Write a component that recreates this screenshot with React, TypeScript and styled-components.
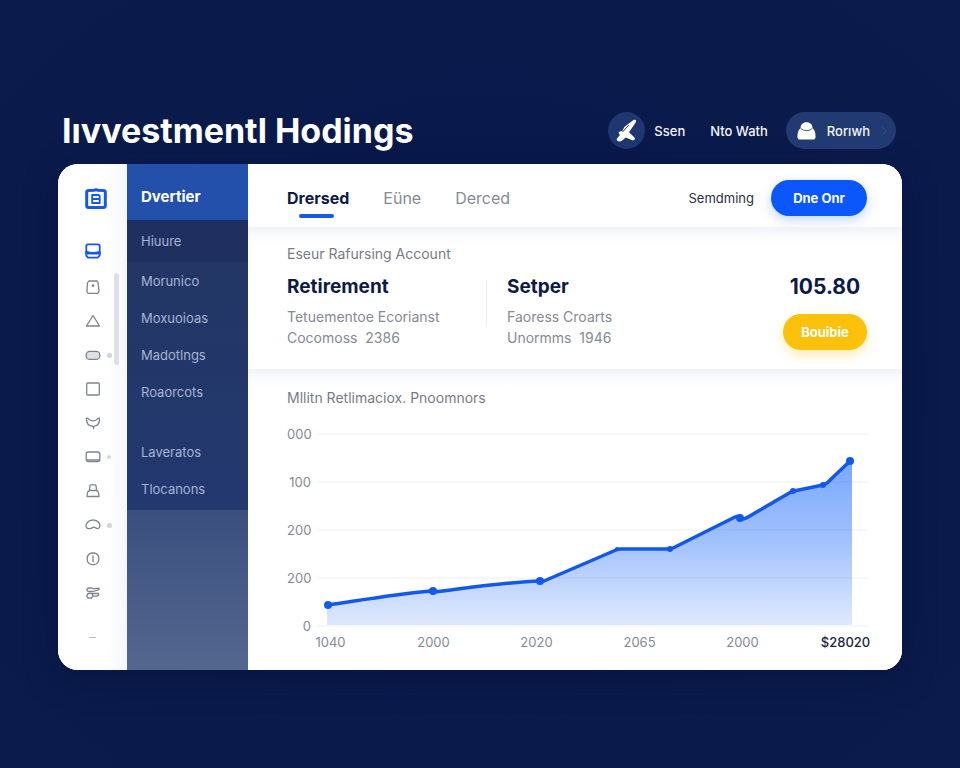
import React from "react";
import styled, { createGlobalStyle, css } from "styled-components";

const Global = createGlobalStyle`
  * { box-sizing: border-box; }
  body {
    margin: 0;
    min-height: 100vh;
    background: radial-gradient(ellipse at center, #07154a 0%, #0a1a4b 60%, #0b1c4c 100%);
    font-family: Inter, "Liberation Sans", sans-serif;
    color: #0d1a45;
  }
  button { font: inherit; border: 0; background: none; padding: 0; cursor: pointer; }
  a { color: inherit; text-decoration: none; }
  h1, h2, p { margin: 0; }
`;

const Page = styled.div`
  padding: 112px 58px 99px;
`;

const TopBar = styled.header`
  display: flex;
  align-items: center;
  justify-content: space-between;
  height: 37px;
  padding: 0 6px 0 4px;
  margin-bottom: 15px;
`;

const Title = styled.h1`
  font-size: 34px;
  line-height: 37px;
  font-weight: 700;
  color: #fff;
`;

const TopActions = styled.div`
  display: flex;
  align-items: center;
  color: #f4f6fc;
  font-size: 13px;
  font-weight: 500;
`;

const UserLink = styled.a`
  display: flex;
  align-items: center;
  gap: 9px;
  margin-right: 25px;
`;

const RoundIcon = styled.span`
  display: grid;
  place-items: center;
  width: 37px;
  height: 37px;
  border-radius: 50%;
  background: #1f3770;
`;

const PillButton = styled.button`
  display: flex;
  align-items: center;
  gap: 11px;
  height: 37px;
  margin-left: 18px;
  padding: 0 9px 0 11px;
  border-radius: 19px;
  background: #213a72;
  color: #f4f6fc;
`;

const Panel = styled.div`
  display: grid;
  grid-template-columns: 69px 121px 1fr;
  border-radius: 20px;
  overflow: hidden;
  background: #fff;
  box-shadow: 0 8px 30px #050f3880;
`;

const Rail = styled.nav`
  position: relative;
  display: flex;
  flex-direction: column;
  padding: 17px 0 15px;
  background: linear-gradient(90deg, #fff 70%, #f4f7fd 100%);
`;

const RailButton = styled.button<{ $tone?: "logo" | "active" }>`
  position: relative;
  display: grid;
  place-items: center;
  width: 69px;
  height: 34px;
  color: #7c8391;
  svg { display: block; }
  ${(p) => p.$tone && css`color: #1459e8;`}
  ${(p) => p.$tone === "logo" && css`height: 36px; margin-bottom: 17px; padding-left: 6px;`}
  ${(p) => p.$tone === "active" && css`margin-bottom: 2px;`}
`;

const RailDot = styled.span<{ $size: number }>`
  position: absolute;
  top: 15px;
  left: 49px;
  width: ${(p) => p.$size}px;
  height: ${(p) => p.$size}px;
  border-radius: 2px;
  background: #d3d6dc;
`;

const ScrollThumb = styled.span`
  position: absolute;
  top: 109px;
  right: 8px;
  width: 5px;
  height: 92px;
  border-radius: 3px;
  background: #dcdfe4;
`;

const RailEnd = styled.span`
  width: 7px;
  height: 1px;
  margin: 27px 0 0 31px;
  background: #b9bdc6;
`;

const Side = styled.nav`
  display: flex;
  flex-direction: column;
  background: linear-gradient(180deg, #3b4f7f 0, #3b4f7f 346px, #54678f 100%);
  font-size: 13px;
  color: #a7b4d4;
`;

const SideHead = styled.a`
  display: flex;
  align-items: center;
  height: 56px;
  padding: 9px 0 0 14px;
  background: #2350aa;
  color: #fff;
  font-size: 15px;
  font-weight: 700;
`;

const SideGroup = styled.div`
  padding-bottom: 3px;
  background: linear-gradient(180deg, #233663, #22386f);
`;

const SideItem = styled.a<{ $current?: boolean; $spaced?: boolean }>`
  display: flex;
  align-items: center;
  height: 37px;
  padding-left: 14px;
  margin-top: ${(p) => (p.$spaced ? 23 : 0)}px;
  ${(p) => p.$current && css`height: 42px; background: #1f3060;`}
`;

const Main = styled.main`
  min-width: 0;
  background: #fff;
`;

const Tabs = styled.div`
  display: flex;
  align-items: center;
  height: 63px;
  padding: 4px 35px 0 39px;
`;

const Tab = styled.button<{ $active?: boolean }>`
  position: relative;
  margin-right: 34px;
  font-size: 16px;
  line-height: 24px;
  color: #868b94;
  ${(p) => p.$active && css`
    color: #0d1a45;
    font-weight: 700;
    &::after {
      content: "";
      position: absolute;
      left: 12px;
      right: 15px;
      bottom: -8px;
      height: 4px;
      border-radius: 2px;
      background: #1459e8;
    }
  `}
`;

const TextLink = styled.a`
  margin-left: auto;
  margin-right: 17px;
  font-size: 13px;
  color: #2a3145;
`;

const Action = styled.button<{ $tone: "blue" | "gold" }>`
  height: 36px;
  border-radius: 18px;
  color: #fff;
  font-size: 13px;
  font-weight: 700;
  ${(p) => p.$tone === "blue"
    ? css`width: 96px; background: #0b57fb; box-shadow: 0 4px 12px #0b57fb40;`
    : css`width: 84px; background: #fcc10b; box-shadow: 0 5px 12px #fcc10b50;`}
`;

const Section = styled.section`
  background: linear-gradient(180deg, #f1f3f8 0, #fafbfd 9px, #fff 18px);
`;

const Caption = styled.p`
  font-size: 14px;
  line-height: 18px;
  color: #777c86;
`;

const Account = styled(Section)`
  padding: 18px 35px 19px 39px;
`;

const AccountRow = styled.div`
  display: grid;
  grid-template-columns: 199px 1px 1fr auto;
  margin-top: 10px;
`;

const Divider = styled.div`
  height: 46px;
  margin-top: 7px;
  background: #eceef2;
`;

const Holding = styled.div<{ $inset?: boolean }>`
  padding-left: ${(p) => (p.$inset ? 20 : 0)}px;
`;

const HoldingName = styled.h2`
  font-size: 19px;
  line-height: 28px;
  font-weight: 700;
  margin-bottom: 5px;
`;

const Detail = styled.p`
  font-size: 14px;
  line-height: 21px;
  color: #858a94;
  white-space: pre;
`;

const Value = styled.div`
  display: flex;
  flex-direction: column;
  align-items: center;
  gap: 13px;
  font-size: 21px;
  line-height: 28px;
  font-weight: 700;
`;

const ChartSection = styled(Section)`
  padding: 20px 0 20px;
`;

const ChartHead = styled.div`
  padding-left: 39px;
`;

const Plot = styled.div`
  display: grid;
  grid-template-columns: 24px 1fr;
  gap: 6px;
  padding: 0 34px 0 39px;
  margin-top: 19px;
  svg { display: block; width: 100%; height: auto; }
`;

const YAxis = styled.div`
  display: flex;
  flex-direction: column;
  justify-content: space-between;
  text-align: right;
  font-size: 13px;
  line-height: 16px;
  color: #858a94;
`;

const XAxis = styled.div`
  display: grid;
  grid-template-columns: repeat(6, 1fr);
  padding: 0 5px 0 31px;
  text-align: center;
  font-size: 13px;
  line-height: 16px;
  color: #858a94;
  b { color: #1c2540; font-weight: 500; }
`;

const Line = ({ children }: { children: React.ReactNode }) => (
  <svg width="18" height="18" viewBox="0 0 18 18" fill="none" stroke="currentColor" strokeWidth="1.3" strokeLinejoin="round" strokeLinecap="round">
    {children}
  </svg>
);

const railIcons: { name: string; dot?: number; art: React.ReactNode }[] = [
  { name: "Bag", art: <><path d="M4.800 3h8.200l1 1.200 1 9.300-1.200 1.800H4.200L3 13.800 3.400 5z" /><circle cx="9" cy="7.600" r=".7" fill="currentColor" /></> },
  { name: "Alerts", art: <path d="M9 3.500 15.500 14H2.500z" /> },
  { name: "Cards", dot: 5, art: <rect x="2.200" y="5.400" width="13.600" height="8" rx="3.500" fill="#dcdfe4" /> },
  { name: "Board", art: <rect x="2.700" y="3" width="12.600" height="12" rx="1" /> },
  { name: "Trophy", art: <path d="M2.500 4.200c1.200-.4 2 .2 2.800 1.500C6.500 7.200 11.500 7.200 12.700 5.700c.8-1.300 1.600-1.900 2.800-1.500.2 4-1 7.300-4.500 7.600l-1.300 1v1.700l-.9-2.300C5 12 2.300 9.500 2.500 4.200z" /> },
  { name: "Screen", dot: 4, art: <><rect x="2.200" y="4" width="13.600" height="9.600" rx="2" /><path d="M2.800 12h12.400" /></> },
  { name: "Profile", art: <><path d="M5.500 8.500 6 3.500 7 2.800h4l1 .8.500 4.900" /><path d="M3 14.500c0-4 .8-6 3-6h6c2.200 0 3 2 3 6z" /></> },
  { name: "Storage", dot: 5, art: <path d="M4 12.500C1.500 12 1.500 9 3 7.200 5 3.200 12 3 14.700 6.500c2 2.500 1.300 5.500-.7 6-1.800.4-2.500-1.300-4-1.300-1.600 0-2 .9-3 1.200-.9.300-2 .4-3 .1z" /> },
  { name: "Information", art: <><rect x="3.200" y="3" width="11.600" height="11.600" rx="5" /><path d="M9 5.800v6" /></> },
  { name: "Transfers", art: <><path d="M4 4h4l1.500.8 5.500-.6v1.500L9 7.500H4L2.800 5.700z" /><path d="M4 9.500h10.500v1.800l-2 .9H9L7.500 14H4l-1.200-2zM8.500 9.500v2" /></> },
];

const sideItems = [
  { text: "Hiuure", current: true },
  { text: "Morunico" },
  { text: "Moxuoioas" },
  { text: "Madotlngs" },
  { text: "Roaorcots" },
  { text: "Laveratos", spaced: true },
  { text: "Tlocanons" },
];

const trend = "M11 179C45 174 80 168 113 165l4 1C150 162 190 156 223 155l4 0L299 124q2-1 5-1h47q3 0 5-1L418 91q5-2 7 2 3 0 6-2L474 66l3-1 29-6 4-2 23-22";
const markers = [
  { x: 11, y: 179, r: 4 }, { x: 116, y: 165, r: 4 }, { x: 223, y: 155, r: 4 },
  { x: 300, y: 123, r: 2 }, { x: 353, y: 123, r: 3 }, { x: 423, y: 92, r: 4 },
  { x: 476, y: 65, r: 3 }, { x: 506, y: 59, r: 3 }, { x: 533, y: 35, r: 4 },
];

const TrendChart = () => (
  <svg viewBox="0 0 551 208" role="img" aria-label="Growth by year">
    <defs>
      <linearGradient id="trendFill" gradientUnits="userSpaceOnUse" x1="0" y1="35" x2="0" y2="199">
        <stop offset="0" stopColor="#79a8fd" />
        <stop offset=".5" stopColor="#a3c2fd" />
        <stop offset="1" stopColor="#dfe9fd" />
      </linearGradient>
    </defs>
    <path d={`${trend}L535 34V199H10V179z`} fill="url(#trendFill)" />
    {[8, 56, 104, 152, 200].map((y) => (
      <path key={y} d={`M0 ${y}H551`} stroke="#5b6b90" strokeOpacity=".1" />
    ))}
    <path d={trend} fill="none" stroke="#1258ea" strokeWidth="3.500" strokeLinejoin="round" strokeLinecap="round" />
    {markers.map((m) => <circle key={m.x} cx={m.x} cy={m.y} r={m.r} fill="#1258ea" />)}
  </svg>
);

export default function App() {
  return (
    <Page>
      <Global />
      <TopBar>
        <Title>Iıvvestmentl Hodings</Title>
        <TopActions>
          <UserLink href="#user">
            <RoundIcon>
              <svg width="21" height="23" viewBox="0 0 21 23" fill="#fff">
                <path d="M17.500 1c2-1 3.200.2 2.300 2.200L13 13.200l5.200 5c1.500 1.700.3 3.700-1.900 3l-6.500-2.800-4.300 3.500C3.300 23 .2 22.200.8 19.800l3-3.500-1.300-3.300 4-1.200L8.300 8z" />
                <path d="m6.500 13 6.200-6.800" stroke="#1f3770" strokeWidth="1" />
              </svg>
            </RoundIcon>
            Ssen
          </UserLink>
          <a href="#watch">Nto Wath</a>
          <PillButton>
            <svg width="19" height="18" viewBox="0 0 19 18" fill="#fff">
              <path d="M3.500 7C3.500 2.500 5.500.3 9.500.3S15.500 2.500 15.500 7l-2 1.500h-8z" />
              <path d="M2 7.500 4 6.500c2 3 9 3 11 0l2 1c1.300 2.500 1.700 5.500 1.500 8.300l-1.200 1.700H1.700L.5 15.800C.3 13 .7 10 2 7.500z" />
              <path d="M4 6.500c2.500 2.600 8.500 2.800 11 0" fill="none" stroke="#213a72" strokeWidth=".8" />
            </svg>
            Rorıwh
            <svg width="6" height="10" viewBox="0 0 6 10" fill="none" stroke="#304883"><path d="m1 1 4 4-4 4" /></svg>
          </PillButton>
        </TopActions>
      </TopBar>
      <Panel>
        <Rail aria-label="Tools">
          <RailButton $tone="logo" aria-label="Home">
            <svg width="22" height="22" viewBox="0 0 22 22" fill="none" stroke="currentColor" strokeLinejoin="round">
              <path d="M3.500 2.500 9 2.200l2-.6 2 .6 5.500.3q1.800 0 1.800 1.800v13.400q0 1.800-1.800 1.800h-15q-1.800 0-1.800-1.800V4.300q0-1.800 1.800-1.800z" strokeWidth="3" />
              <path d="M7.200 7h6.300l1.200 1v7H7.200zM7.200 11h7.500" strokeWidth="1.900" />
            </svg>
          </RailButton>
          <RailButton $tone="active" aria-label="Overview">
            <svg width="16" height="16" viewBox="0 0 16 16" fill="none" stroke="currentColor" strokeWidth="1.800" strokeLinejoin="round">
              <path d="M2.500 1.300h11l1.200 1.200v8.200H1.300V2.500z" />
              <path d="M1.300 8.500c4 2 9 1.500 13.400.5v3.500l-2 2.200H3l-1.700-2z" />
            </svg>
          </RailButton>
          {railIcons.map((i) => (
            <RailButton key={i.name} aria-label={i.name}>
              <Line>{i.art}</Line>
              {i.dot && <RailDot $size={i.dot} />}
            </RailButton>
          ))}
          <RailEnd />
          <ScrollThumb />
        </Rail>
        <Side aria-label="Sections">
          <SideHead href="#top">Dvertier</SideHead>
          <SideGroup>
            {sideItems.map((i) => (
              <SideItem key={i.text} href={`#${i.text}`} $current={i.current} $spaced={i.spaced}>{i.text}</SideItem>
            ))}
          </SideGroup>
        </Side>
        <Main>
          <Tabs>
            <Tab $active>Drersed</Tab>
            <Tab>Eüne</Tab>
            <Tab>Derced</Tab>
            <TextLink href="#more">Semdming</TextLink>
            <Action $tone="blue">Dne Onr</Action>
          </Tabs>
          <Account>
            <Caption>Eseur Rafursing Account</Caption>
            <AccountRow>
              <Holding>
                <HoldingName>Retirement</HoldingName>
                <Detail>Tetuementoe Ecorianst</Detail>
                <Detail>{"Cocomoss  2386"}</Detail>
              </Holding>
              <Divider />
              <Holding $inset>
                <HoldingName>Setper</HoldingName>
                <Detail>Faoress Croarts</Detail>
                <Detail>{"Unormms  1946"}</Detail>
              </Holding>
              <Value>
                105.80
                <Action $tone="gold">Bouibie</Action>
              </Value>
            </AccountRow>
          </Account>
          <ChartSection>
            <ChartHead><Caption>Mllitn Retlimaciox. Pnoomnors</Caption></ChartHead>
            <Plot>
              <YAxis>
                <span>000</span><span>100</span><span>200</span><span>200</span><span>0</span>
              </YAxis>
              <TrendChart />
            </Plot>
            <XAxis>
              <span>1040</span><span>2000</span><span>2020</span><span>2065</span><span>2000</span><b>$28020</b>
            </XAxis>
          </ChartSection>
        </Main>
      </Panel>
    </Page>
  );
}
